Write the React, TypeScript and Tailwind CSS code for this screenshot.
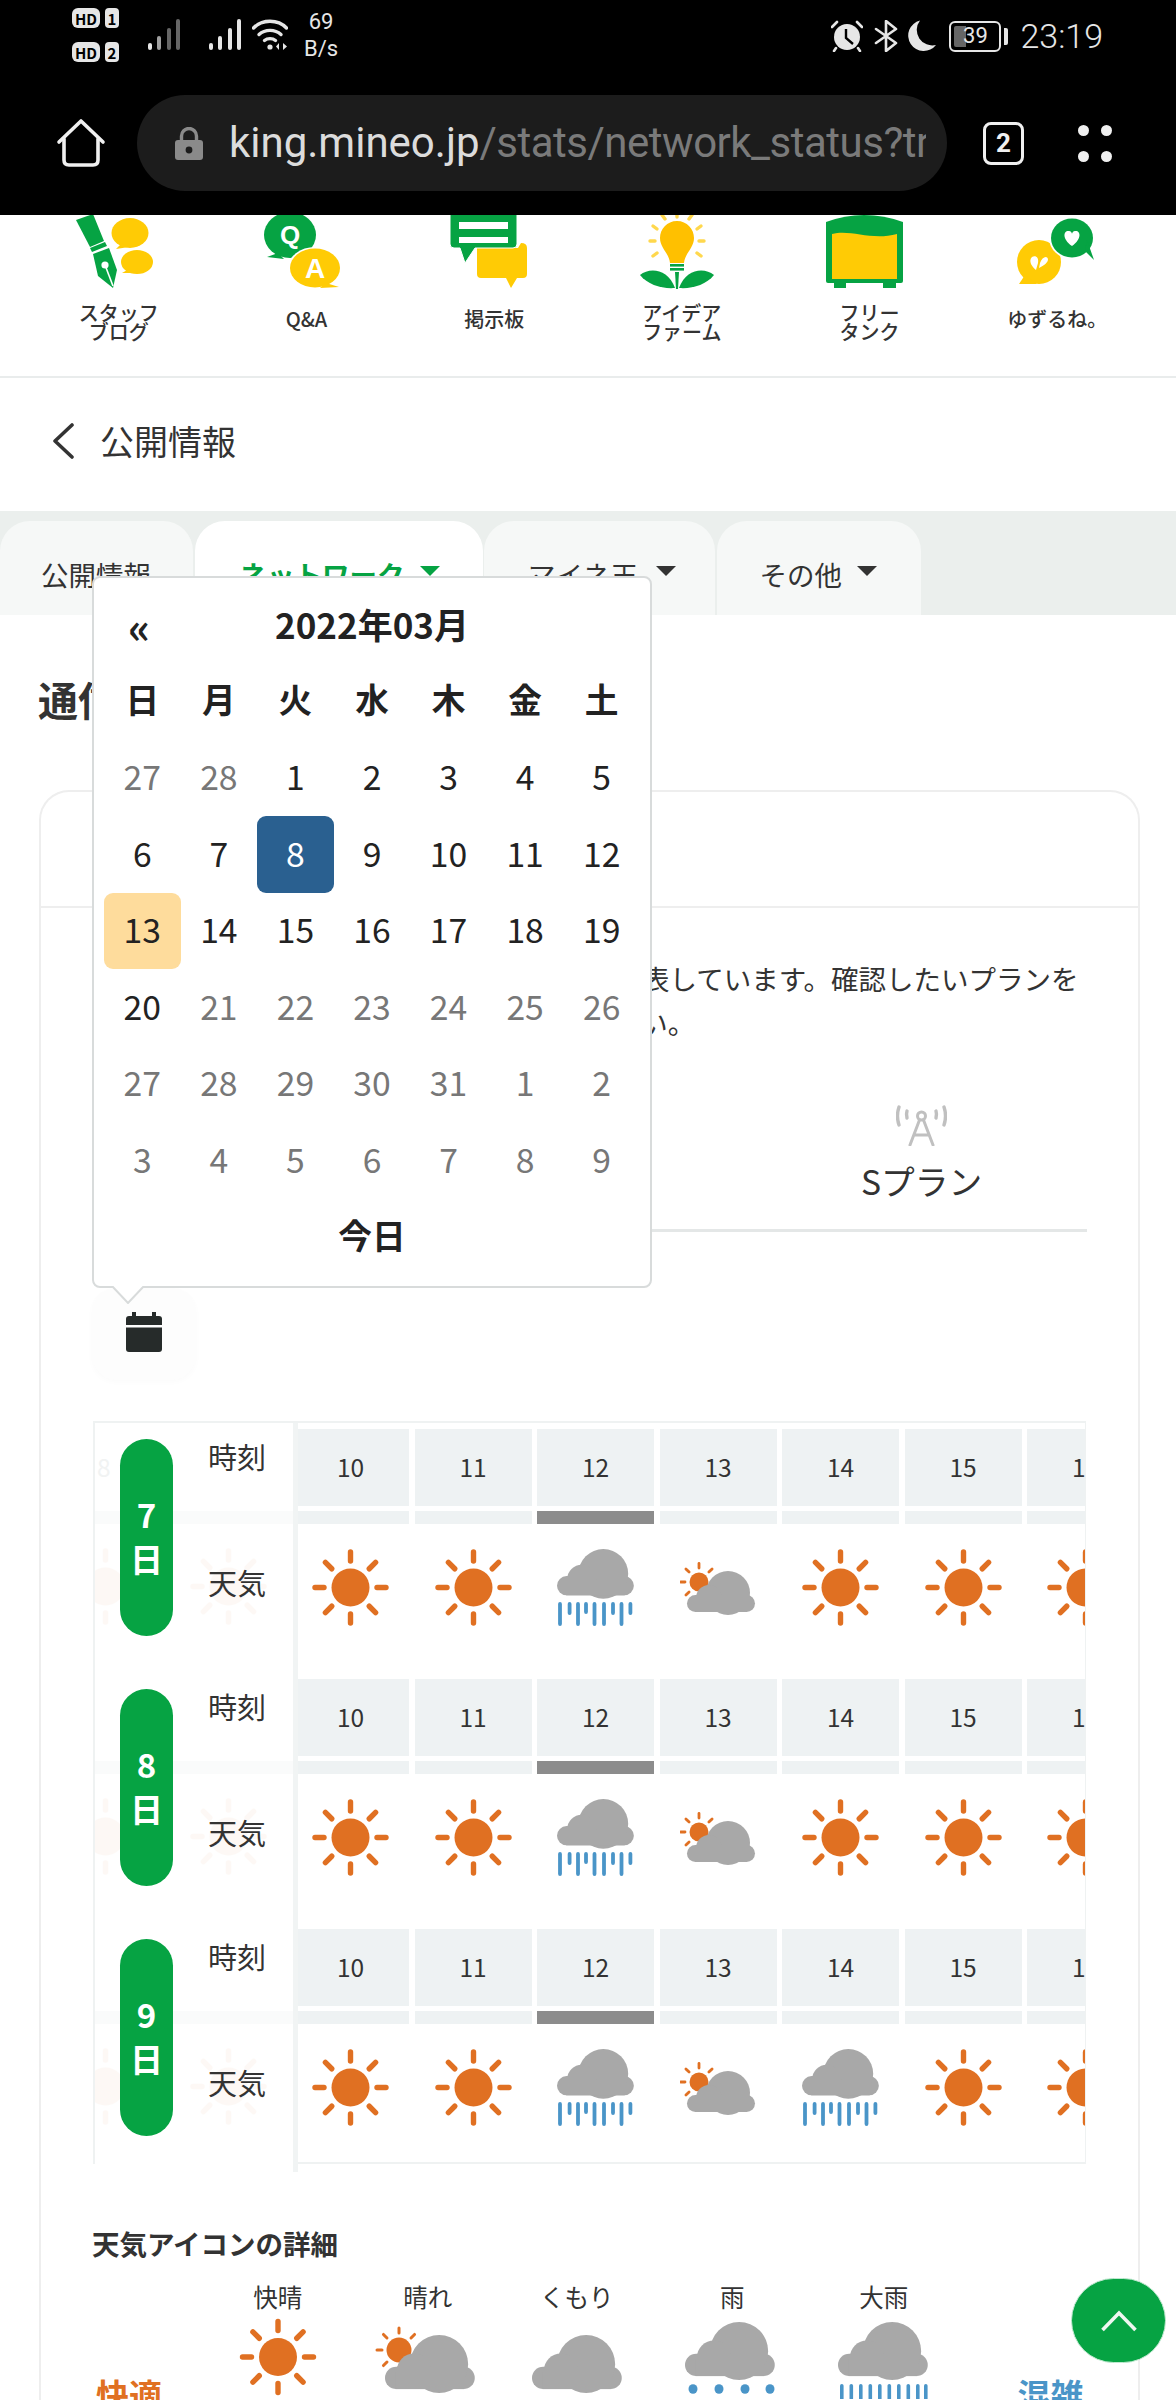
import type { ReactNode } from 'react';

const ORANGE = '#e07022';
const CLOUD = '#a8a8a8';
const RAIN = '#4a95c8';
const GREEN = '#06a343';
const YELLOW = '#ffcb05';

const hours = [10, 11, 12, 13, 14, 15, 16];

type Weather = 'sun' | 'partly' | 'heavy';

const days: { day: number; weather: Weather[] }[] = [
  { day: 7, weather: ['sun', 'sun', 'heavy', 'partly', 'sun', 'sun', 'sun'] },
  { day: 8, weather: ['sun', 'sun', 'heavy', 'partly', 'sun', 'sun', 'sun'] },
  { day: 9, weather: ['sun', 'sun', 'heavy', 'partly', 'heavy', 'sun', 'sun'] },
];

const calendar: { n: number; other?: boolean; selected?: boolean; today?: boolean }[][] = [
  [{ n: 27, other: true }, { n: 28, other: true }, { n: 1 }, { n: 2 }, { n: 3 }, { n: 4 }, { n: 5 }],
  [{ n: 6 }, { n: 7 }, { n: 8, selected: true }, { n: 9 }, { n: 10 }, { n: 11 }, { n: 12 }],
  [{ n: 13, today: true }, { n: 14 }, { n: 15 }, { n: 16 }, { n: 17 }, { n: 18 }, { n: 19 }],
  [{ n: 20 }, { n: 21, other: true }, { n: 22, other: true }, { n: 23, other: true }, { n: 24, other: true }, { n: 25, other: true }, { n: 26, other: true }],
  [{ n: 27, other: true }, { n: 28, other: true }, { n: 29, other: true }, { n: 30, other: true }, { n: 31, other: true }, { n: 1, other: true }, { n: 2, other: true }],
  [{ n: 3, other: true }, { n: 4, other: true }, { n: 5, other: true }, { n: 6, other: true }, { n: 7, other: true }, { n: 8, other: true }, { n: 9, other: true }],
];

function Rays({ cx, cy, r1, r2, width }: { cx: number; cy: number; r1: number; r2: number; width: number }) {
  const angles = [0, 45, 90, 135, 180, 225, 270, 315];
  return (
    <g stroke={ORANGE} strokeWidth={width} strokeLinecap="round">
      {angles.map((a) => {
        const c = Math.cos((a * Math.PI) / 180);
        const s = Math.sin((a * Math.PI) / 180);
        return <line key={a} x1={cx + c * r1} y1={cy + s * r1} x2={cx + c * r2} y2={cy + s * r2} />;
      })}
    </g>
  );
}

// cloud is 68 x 41 before scaling
function Cloud({ x, y, scale }: { x: number; y: number; scale: number }) {
  return (
    <g transform={`translate(${x} ${y}) scale(${scale})`} fill={CLOUD}>
      <rect x="0" y="24" width="68" height="17" rx="8.5" />
      <circle cx="41" cy="22" r="22" />
      <circle cx="22" cy="27" r="13" />
      <rect x="8" y="28" width="52" height="13" />
    </g>
  );
}

function SunGroup() {
  return (
    <>
      <Rays cx={38.5} cy={38.5} r1={26.5} r2={35.5} width={5.4} />
      <circle cx="38.5" cy="38.5" r="19" fill={ORANGE} />
    </>
  );
}

function WeatherIcon({ type }: { type: Weather }) {
  return (
    <svg width="77" height="77" viewBox="0 0 77 77">
      {type === 'sun' && <SunGroup />}
      {type === 'partly' && (
        <>
          <Rays cx={19} cy={33} r1={14} r2={18.5} width={2.8} />
          <circle cx="19" cy="33" r="9.5" fill={ORANGE} />
          <Cloud x={7} y={22} scale={1} />
        </>
      )}
      {type === 'heavy' && (
        <>
          <Cloud x={0} y={0} scale={1.13} />
          <g stroke={RAIN} strokeWidth="3.8" strokeLinecap="round">
            <line x1="3" y1="55" x2="3" y2="75" />
            <line x1="12.6" y1="55" x2="12.6" y2="64" />
            <line x1="21" y1="55" x2="21" y2="75" />
            <line x1="29" y1="55" x2="29" y2="63" />
            <line x1="37.5" y1="55" x2="37.5" y2="75" />
            <line x1="47" y1="55" x2="47" y2="75" />
            <line x1="56" y1="55" x2="56" y2="64" />
            <line x1="64.5" y1="55" x2="64.5" y2="75" />
            <line x1="73.4" y1="55" x2="73.4" y2="64" />
          </g>
        </>
      )}
    </svg>
  );
}

function StatusBar() {
  return (
    <div className="flex h-[70px] items-center pl-[72px] pr-[73px] text-[#e6e6e6]">
      <div className="flex flex-col gap-[14px]">
        {['1', '2'].map((n) => (
          <div key={n} className="flex gap-[5px]">
            <span className="flex h-[20px] w-[28px] items-center justify-center rounded-[6px] bg-[#e6e6e6] text-[15px] font-bold leading-none text-black">HD</span>
            <span className="flex h-[20px] w-[14px] items-center justify-center rounded-[4px] bg-[#e6e6e6] text-[15px] font-bold leading-none text-black">{n}</span>
          </div>
        ))}
      </div>
      <svg className="ml-[29px]" width="32" height="32" viewBox="0 0 32 32">
        <rect x="0" y="24" width="4" height="7" rx="2" fill="#e6e6e6" />
        <rect x="9" y="17" width="4" height="14" rx="2" fill="#a0a0a0" />
        <rect x="19" y="9" width="4" height="22" rx="2" fill="#666" />
        <rect x="28" y="0" width="4" height="31" rx="2" fill="#666" />
      </svg>
      <svg className="ml-[29px]" width="32" height="32" viewBox="0 0 32 32" fill="#e6e6e6">
        <rect x="0" y="24" width="4" height="7" rx="2" />
        <rect x="9" y="17" width="4" height="14" rx="2" />
        <rect x="19" y="9" width="4" height="22" rx="2" />
        <rect x="28" y="0" width="4" height="31" rx="2" />
      </svg>
      <svg className="ml-[11px]" width="36" height="32" viewBox="0 0 36 32" fill="none" stroke="#e6e6e6" strokeWidth="3.4" strokeLinecap="round">
        <path d="M1.5 9 C10 0 26 0 34.5 9" />
        <path d="M7 15.5 C13 10 23 10 29 15.5" />
        <path d="M12.5 21.5 C15.5 19 20.5 19 23.5 21.5" />
        <circle cx="18" cy="28" r="2.6" fill="#e6e6e6" stroke="none" />
        <path d="M27 24 L27 31 L24 27.5 Z M31 24 L31 31 L35 27.5 Z" fill="#e6e6e6" stroke="none" />
      </svg>
      <div className="ml-[16px] flex w-[34px] flex-col items-center font-['Roboto',sans-serif] text-[22px] leading-[27px]">
        <span>69</span>
        <span>B/s</span>
      </div>
      <div className="ml-auto mt-[2px] flex items-center">
        <svg width="32" height="32" viewBox="0 0 32 32">
          <circle cx="16" cy="17" r="13" fill="#e6e6e6" />
          <path d="M15 9 V18 L22 24" fill="none" stroke="#000" strokeWidth="2.4" />
          <path d="M1 7 L6 2 M26 2 L31 7 M5 28 L3 31 M27 28 L29 31" stroke="#e6e6e6" strokeWidth="2.6" strokeLinecap="round" />
        </svg>
        <svg className="ml-[11px]" width="24" height="32" viewBox="0 0 24 32" fill="none" stroke="#e6e6e6" strokeWidth="2.6" strokeLinejoin="round" strokeLinecap="round">
          <path d="M2 9 L22 23 L12 31 V1 L22 9 L2 23" />
        </svg>
        <svg className="ml-[10px]" width="28" height="32" viewBox="0 0 28 32">
          <path d="M12 0.5 A15.5 15.5 0 1 0 28 25 A15.5 15.5 0 0 1 12 0.5 Z" fill="#e6e6e6" />
        </svg>
        <div className="relative ml-[13px] flex h-[31px] w-[52px] items-center justify-center overflow-hidden rounded-[6px] border-2 border-[#e6e6e6]">
          <div className="absolute bottom-[3px] left-[3px] top-[3px] w-[12px] rounded-l-[2px] bg-[#666]" />
          <span className="relative font-['Roboto',sans-serif] text-[22px] leading-none">39</span>
        </div>
        <div className="ml-[3px] h-[17px] w-[4px] rounded-r-[2px] bg-[#e6e6e6]" />
        <span className="ml-[12px] font-['Roboto',sans-serif] text-[34px] font-light leading-none">23:19</span>
      </div>
    </div>
  );
}

function UrlBar() {
  return (
    <div className="mt-[25px] flex items-center pl-[56px]">
      <svg width="50" height="50" viewBox="0 0 50 50" fill="none" stroke="#f0f0f0" strokeWidth="3.6" strokeLinecap="round" strokeLinejoin="round">
        <path d="M3 24 L25 3 L47 24" />
        <path d="M8 21 V42 Q8 47 13 47 H37 Q42 47 42 42 V21" />
      </svg>
      <div className="ml-[31px] flex h-[96px] w-[810px] items-center overflow-hidden rounded-[48px] bg-[#1c1c1c] pl-[38px] pr-[21px]">
        <svg width="28" height="33" viewBox="0 0 28 33" className="shrink-0">
          <path d="M6.5 14 V9 A7.5 7.5 0 0 1 21.5 9 V14" fill="none" stroke="#8a8a8a" strokeWidth="3.4" />
          <rect x="0" y="13" width="28" height="20" rx="3" fill="#8a8a8a" />
          <circle cx="14" cy="23" r="3.4" fill="#1c1c1c" />
        </svg>
        <div className="ml-[26px] overflow-hidden whitespace-nowrap font-['Roboto',sans-serif] text-[42px] leading-[50px]">
          <span className="text-[#dcdcdc]">king.mineo.jp</span>
          <span className="tracking-[-0.5px] text-[#7a7a7a]">/stats/network_status?traffic=all</span>
        </div>
      </div>
      <div className="ml-[36px] flex h-[43px] w-[41px] items-center justify-center rounded-[8px] border-[3.5px] border-[#f0f0f0] font-['Roboto',sans-serif] text-[26px] font-bold leading-none text-[#f0f0f0]">2</div>
      <div className="ml-[54px] grid grid-cols-2 gap-x-[12px] gap-y-[15px]">
        {[0, 1, 2, 3].map((i) => (
          <div key={i} className="h-[11px] w-[11px] rounded-full bg-[#f0f0f0]" />
        ))}
      </div>
    </div>
  );
}

function NavIcon({ name }: { name: string }) {
  if (name === 'blog') {
    return (
      <svg width="100" height="77" viewBox="0 0 100 77">
        <path d="M7 5 L24 -1 L35 26 L21 32 Z" fill={GREEN} />
        <path d="M21 33 L36 27 L38 31 L23 37 Z" fill={GREEN} />
        <path d="M24 39 L40 33 L48 55 L44 73 L29 61 Z" fill={GREEN} />
        <path d="M36 50 L44 71" stroke="#fff" strokeWidth="1.6" />
        <circle cx="36" cy="50" r="3.6" fill="#fff" />
        <ellipse cx="61" cy="18" rx="18.5" ry="15" fill={YELLOW} />
        <path d="M53 28 L47 34 L60 32 Z" fill={YELLOW} />
        <ellipse cx="68" cy="47" rx="16" ry="12" fill={YELLOW} />
        <path d="M60 54 L53 58 L66 58 Z" fill={YELLOW} />
      </svg>
    );
  }
  if (name === 'qa') {
    return (
      <svg width="100" height="77" viewBox="0 0 100 77">
        <ellipse cx="34" cy="20" rx="26" ry="23" fill={GREEN} />
        <path d="M22 38 L11 42 L28 44 Z" fill={GREEN} />
        <ellipse cx="59" cy="53" rx="27" ry="21" fill="#fff" />
        <ellipse cx="59" cy="53" rx="25" ry="19.5" fill={YELLOW} />
        <path d="M70 68 L83 72 L64 73 Z" fill={YELLOW} />
        <text x="34" y="29" textAnchor="middle" fontSize="26" fontWeight="700" fill="#fff" fontFamily="Liberation Sans">Q</text>
        <text x="59" y="63" textAnchor="middle" fontSize="28" fontWeight="700" fill="#fff" fontFamily="Liberation Sans">A</text>
      </svg>
    );
  }
  if (name === 'board') {
    return (
      <svg width="100" height="77" viewBox="0 0 100 77">
        <path d="M33 33 H74 L77 28 Q83 28 83 33 V59 Q83 63 79 63 H73 L67 73 L62 63 H37 Q33 63 33 59 Z" fill={YELLOW} />
        <path d="M6 -6 H73 V29 Q73 33 69 33 H31 L21 48 L16 33 H10 Q6 33 6 29 Z" fill={GREEN} stroke="#fff" strokeWidth="1" />
        <rect x="15" y="7" width="49" height="7" fill="#fff" />
        <rect x="15" y="22" width="49" height="6" fill="#fff" />
      </svg>
    );
  }
  if (name === 'idea') {
    return (
      <svg width="100" height="77" viewBox="0 0 100 77">
        <g stroke="#ffd84d" strokeWidth="3.4" strokeLinecap="round">
          <line x1="45" y1="-3" x2="45" y2="2" />
          <line x1="30" y1="0" x2="33" y2="4" />
          <line x1="60" y1="0" x2="57" y2="4" />
          <line x1="21" y1="11" x2="25" y2="14" />
          <line x1="69" y1="11" x2="65" y2="14" />
          <line x1="18" y1="26" x2="23" y2="26" />
          <line x1="67" y1="26" x2="72" y2="26" />
          <line x1="21" y1="41" x2="25" y2="38" />
          <line x1="69" y1="41" x2="65" y2="38" />
        </g>
        <path d="M45 6 C35 6 28 14 28 23 C28 33 37 38 38 48 H52 C53 38 62 33 62 23 C62 14 55 6 45 6 Z" fill="#ffc000" />
        <rect x="38" y="49" width="14" height="2.6" fill={GREEN} />
        <rect x="38" y="53" width="14" height="2.6" fill={GREEN} />
        <path d="M43 57 H47 L46 74 H44 Z" fill={GREEN} />
        <path d="M8 60 C18 52 36 54 43 73 C30 74 16 70 8 60 Z" fill={GREEN} />
        <path d="M82 60 C72 52 54 54 47 73 C60 74 74 70 82 60 Z" fill={GREEN} />
      </svg>
    );
  }
  if (name === 'tank') {
    return (
      <svg width="100" height="77" viewBox="0 0 100 77">
        <path d="M7 7 Q26 0 45 0 Q65 0 84 7 V66 Q84 68 82 68 H9 Q7 68 7 66 Z" fill={GREEN} />
        <rect x="15" y="66" width="12" height="7" fill={GREEN} />
        <rect x="64" y="66" width="13" height="7" fill={GREEN} />
        <path d="M13 19 C32 14 52 26 78 19 V64 H13 Z" fill={YELLOW} />
      </svg>
    );
  }
  return (
    <svg width="100" height="77" viewBox="0 0 100 77">
      <ellipse cx="32" cy="47" rx="22" ry="22" fill={YELLOW} />
      <path d="M18 60 L12 69 L30 69 Z" fill={YELLOW} />
      <path d="M25 42 C29 40 32 43 31 48 L29 55 C25 52 21 46 25 42 Z M33 48 C35 42 40 40 41 44 C41 48 37 50 32 53 Z" fill="#fff" />
      <ellipse cx="65" cy="23" rx="23" ry="21" fill="#fff" />
      <ellipse cx="65" cy="23" rx="21" ry="19.5" fill={GREEN} />
      <path d="M78 36 L87 45 L80 25 Z" fill={GREEN} />
      <path d="M65 31 C54 23 57 15 62 16 C64 16 65 18 65 19 C65 18 66 16 68 16 C73 15 76 23 65 31 Z" fill="#fff" />
    </svg>
  );
}

const navItems: { icon: string; label: ReactNode }[] = [
  { icon: 'blog', label: <>スタッフ<br />ブログ</> },
  { icon: 'qa', label: 'Q&A' },
  { icon: 'board', label: '掲示板' },
  { icon: 'idea', label: <>アイデア<br />ファーム</> },
  { icon: 'tank', label: <>フリー<br />タンク</> },
  { icon: 'yuzuru', label: 'ゆずるね。' },
];

function NavRow() {
  return (
    <div className="grid h-[163px] grid-cols-6 overflow-hidden border-b-2 border-[#e9ecec] px-[25px]">
      {navItems.map((item) => (
        <div key={item.icon} className="flex flex-col items-center">
          <NavIcon name={item.icon} />
          <div className={`flex h-[60px] items-center justify-center text-center text-[20px] font-medium leading-[19px] text-[#333] ${typeof item.label === 'string' ? 'pb-[8px]' : ''}`}>
            <span>{item.label}</span>
          </div>
        </div>
      ))}
    </div>
  );
}

function Caret({ className }: { className: string }) {
  return <span className={`inline-block h-0 w-0 border-x-[10px] border-t-[10px] border-x-transparent ${className}`} />;
}

function TopTabs() {
  return (
    <div className="flex h-[104px] gap-[1.5px] bg-[#ebefed] pt-[10px] text-[27.5px] leading-[40px] text-[#333]">
      <div className="w-[193px] rounded-t-[30px] bg-[#f6f8f7] pl-[41px] pt-[33px]">公開情報</div>
      <div className="flex w-[288px] items-start gap-[15px] rounded-t-[30px] bg-white pl-[45px] pt-[33px] font-bold text-[#06a343]">
        <span>ネットワーク</span>
        <Caret className="mt-[12px] border-t-[#06a343]" />
      </div>
      <div className="flex w-[231px] items-start gap-[18px] rounded-t-[30px] bg-[#f6f8f7] pl-[44px] pt-[33px]">
        <span>マイネ王</span>
        <Caret className="mt-[12px] border-t-[#333]" />
      </div>
      <div className="flex w-[204px] items-start gap-[15px] rounded-t-[30px] bg-[#f6f8f7] pl-[43px] pt-[33px]">
        <span>その他</span>
        <Caret className="mt-[12px] border-t-[#333]" />
      </div>
    </div>
  );
}

function DayRow({ weather }: { weather: Weather[] }) {
  return (
    <div className="flex gap-[5.5px]">
      {hours.map((h, i) => (
        <div key={h} className="w-[117px] shrink-0">
          <div className="flex h-[77px] items-center justify-center bg-[#eef2f3] text-[24.5px] text-[#333]">{h}</div>
          <div className={`mt-[5px] h-[13px] ${i === 2 ? 'bg-[#8c8c8c]' : 'bg-[#eef2f3]'}`} />
          <div className="flex h-[155px] justify-center bg-white pt-[25px]">
            <WeatherIcon type={weather[i]} />
          </div>
        </div>
      ))}
    </div>
  );
}

function DayLabel({ day }: { day: number }) {
  return (
    <div className="relative flex h-[250px] overflow-hidden pl-[25px] pt-[10px]">
      <div className="absolute left-0 right-0 top-[82px] h-[13px] bg-[#fafbfb]" />
      {day === 7 && <span className="absolute left-[2px] top-[20px] text-[24.5px] text-[#f1f3f3]">8</span>}
      <div className="absolute left-[-28px] top-[119px] opacity-[0.04]">
        <WeatherIcon type="sun" />
      </div>
      <div className="absolute left-[95px] top-[119px] opacity-[0.04]">
        <WeatherIcon type="sun" />
      </div>
      <div className="relative flex h-[197px] w-[53px] flex-col items-center justify-center gap-[6px] rounded-full bg-[#06a343] pb-[4px] text-[33px] font-bold leading-[38px] text-white">
        <span>{day}</span>
        <span>日</span>
      </div>
      <div className="relative ml-[35px] mt-[-10px] flex flex-col gap-[72px] text-[29px] leading-[54px] text-[#333]">
        <span>時刻</span>
        <span>天気</span>
      </div>
    </div>
  );
}

function WeatherTable() {
  return (
    <div className="mx-[1px] mt-[41px] flex h-[751px] border-t-2 border-[#eff2f2]">
      <div className="h-[741px] w-[200px] shrink-0 overflow-hidden border-l-2 border-[#eff2f2] pt-[6px]">
        {days.map((d) => (
          <DayLabel key={d.day} day={d.day} />
        ))}
      </div>
      <div className="w-[5px] shrink-0 bg-[#f1f4f4]" />
      <div className="h-[741px] min-w-0 flex-1 overflow-hidden border-b-2 border-r border-[#eff2f2] pt-[6px]">
        <div className="ml-[-6px]">
          {days.map((d) => (
            <div key={d.day} className="h-[250px]">
              <DayRow weather={d.weather} />
            </div>
          ))}
        </div>
      </div>
    </div>
  );
}

function LegendIcon({ type }: { type: string }) {
  return (
    <svg width="110" height="82" viewBox="0 0 110 82">
      {type === 'sunny' && (
        <g transform="translate(16.5 1.5)">
          <SunGroup />
        </g>
      )}
      {type === 'fine' && (
        <>
          <Rays cx={25} cy={33} r1={17} r2={22} width={3} />
          <circle cx="25" cy="33" r="12.5" fill={ORANGE} />
          <Cloud x={11} y={18} scale={1.32} />
        </>
      )}
      {type === 'cloudy' && <Cloud x={6} y={18} scale={1.32} />}
      {type === 'rain' && (
        <>
          <Cloud x={8} y={5} scale={1.32} />
          <g fill={RAIN}>
            <ellipse cx="16" cy="72" rx="4.5" ry="4.8" />
            <ellipse cx="42" cy="72" rx="4.5" ry="4.8" />
            <ellipse cx="68" cy="72" rx="4.5" ry="4.8" />
            <ellipse cx="93" cy="72" rx="4.5" ry="4.8" />
          </g>
        </>
      )}
      {type === 'heavy' && (
        <>
          <Cloud x={9} y={5} scale={1.32} />
          <g fill={RAIN}>
            {[11, 20.5, 30, 39.5, 49, 58.5, 68, 77.5, 87, 95].map((x) => (
              <rect key={x} x={x} y="67" width="3.6" height="16" rx="1.8" />
            ))}
          </g>
        </>
      )}
    </svg>
  );
}

const legend = [
  { key: 'sunny', label: '快晴', labelClass: '' },
  { key: 'fine', label: '晴れ', labelClass: 'mr-[3px]' },
  { key: 'cloudy', label: 'くもり', labelClass: 'mr-[8px]' },
  { key: 'rain', label: '雨', labelClass: '' },
  { key: 'heavy', label: '大雨', labelClass: '' },
];

function Legend() {
  return (
    <div>
      <h3 className="mt-[51px] text-[27.5px] font-bold leading-[40px] text-[#333]">天気アイコンの詳細</h3>
      <div className="mt-[19px] flex">
        <div className="w-[110px] pl-[4px] pt-[92px] text-[33px] font-bold leading-[40px] text-[#e07022]">快適</div>
        {legend.map((item) => (
          <div key={item.key} className="flex w-[151.5px] flex-col items-center">
            <span className={`text-[24.5px] leading-[30px] text-[#333] ${item.labelClass}`}>{item.label}</span>
            <div className="mt-[5px]">
              <LegendIcon type={item.key} />
            </div>
          </div>
        ))}
        <div className="ml-[58px] pt-[92px] text-[33px] font-bold leading-[40px] text-[#4a95c8]">混雑</div>
      </div>
    </div>
  );
}

function CalendarPopup() {
  return (
    <div className="absolute left-[92px] top-[576px] z-10 h-[712px] w-[560px] rounded-[8px] border-2 border-[#d8dbdb] bg-white pl-[10px] pt-[12px] text-[33.7px] text-[#222]">
      <div className="relative flex h-[72px] w-[536px] items-center justify-center pb-[4px] text-[35px] font-bold">
        <span className="absolute left-[24px] top-[4px] text-[42px] leading-[64px]">«</span>
        <span>2022年03月</span>
      </div>
      <div className="grid w-[536px] grid-cols-7">
        {['日', '月', '火', '水', '木', '金', '土'].map((d) => (
          <div key={d} className="flex h-[77.6px] items-center justify-center pb-[3px] font-bold">{d}</div>
        ))}
        {calendar.flat().map((c, i) => (
          <div
            key={i}
            className={`flex h-[76.6px] items-center justify-center rounded-[9px] pb-[3px] ${
              c.selected ? 'bg-[#2a6090] text-white' : c.today ? 'bg-[#fedc9c]' : c.other ? 'text-[#777]' : ''
            }`}
          >
            {c.n}
          </div>
        ))}
      </div>
      <div className="flex h-[76px] w-[536px] items-center justify-center pb-[3px] font-bold">今日</div>
      <svg className="absolute left-[17px] top-[708px]" width="34" height="18" viewBox="0 0 34 18">
        <path d="M1 0 L17 17 L33 0" fill="#fff" stroke="#d8dbdb" strokeWidth="2" />
      </svg>
    </div>
  );
}

export default function App() {
  return (
    <div className="relative h-[2400px] w-[1176px] overflow-hidden bg-white font-['Noto_Sans_CJK_JP',sans-serif]">
      <header className="h-[215px] bg-black">
        <StatusBar />
        <UrlBar />
      </header>
      <NavRow />
      <div className="flex h-[133px] items-center pb-[8px] pl-[52px]">
        <svg width="22" height="36" viewBox="0 0 22 36" fill="none" stroke="#333" strokeWidth="3.6" strokeLinecap="round" strokeLinejoin="round">
          <path d="M20 2 L3 18 L20 34" />
        </svg>
        <span className="ml-[26px] text-[34px] leading-none text-[#333]">公開情報</span>
      </div>
      <TopTabs />
      <main className="pl-[38px] pr-[35px]">
        <h1 className="pt-[60px] text-[40px] font-bold leading-[48px] text-[#333]">通信状況</h1>
        <div className="mx-[1px] mt-[67px] rounded-t-[30px] border-x-2 border-t-2 border-[#eeeeee]">
          <div className="flex h-[116px] items-center border-b-2 border-[#eeeeee] pl-[51px] text-[29px] font-bold text-[#333]">週間予報</div>
          <div className="px-[51px] pt-[48px]">
            <p className="text-[27.5px] leading-[44px] text-[#333]">
              ネットワークの混雑状況を時間帯別に天気で表しています。確認したいプランを
              <br />
              下のタブから選択し、日時を指定してください。
            </p>
            <div className="mt-[54px] flex border-b-[3px] border-[#e4e7e7]">
              {['A', 'D', 'S'].map((plan, i) => (
                <div key={plan} className={`flex flex-1 flex-col items-center pt-[7px] ${i === 0 ? 'border-l-2 border-[#c4c4c4]' : ''}`}>
                  <svg width="51" height="41" viewBox="0 0 51 41" fill="none" stroke="#c0c0c0" strokeWidth="3" strokeLinecap="round">
                    <circle cx="25.5" cy="11" r="4" />
                    <path d="M23.5 15 L14 40 M27.5 15 L37 40 M18 30 H33" />
                    <path d="M3 2 Q0 11 3 20 M48 2 Q51 11 48 20" strokeWidth="3.4" />
                    <path d="M11 6 Q10 9 11 13 M40 6 Q41 9 40 13" strokeWidth="3.4" />
                  </svg>
                  <span className="mt-[10px] pb-[23px] text-[33.7px] leading-[50px] text-[#333]">{plan}プラン</span>
                </div>
              ))}
            </div>
            <div className="mt-[56px] flex h-[92px] w-[104px] items-center justify-center rounded-[24px] bg-[#fdfdfd] shadow-[0_2px_6px_rgba(0,0,0,0.02)]">
              <svg className="mb-[4px]" width="36" height="40" viewBox="0 0 36 40" fill="#262b2a">
                <rect x="6" y="0" width="4" height="8" />
                <rect x="26" y="0" width="4" height="8" />
                <path d="M3 4 H33 Q36 4 36 7 V13 H0 V7 Q0 4 3 4 Z" />
                <path d="M0 15.5 H36 V37 Q36 40 33 40 H3 Q0 40 0 37 Z" />
              </svg>
            </div>
            <WeatherTable />
            <Legend />
          </div>
        </div>
      </main>
      <CalendarPopup />
      <button className="absolute left-[1071px] top-[2278px] z-10 flex h-[85px] w-[95px] items-center justify-center rounded-full border border-[#bfe8cf] bg-[#06a343]">
        <svg width="36" height="22" viewBox="0 0 36 22" fill="none" stroke="#eef7f1" strokeWidth="3.6">
          <path d="M1.5 20 L18 3 L34.5 20" />
        </svg>
      </button>
    </div>
  );
}
